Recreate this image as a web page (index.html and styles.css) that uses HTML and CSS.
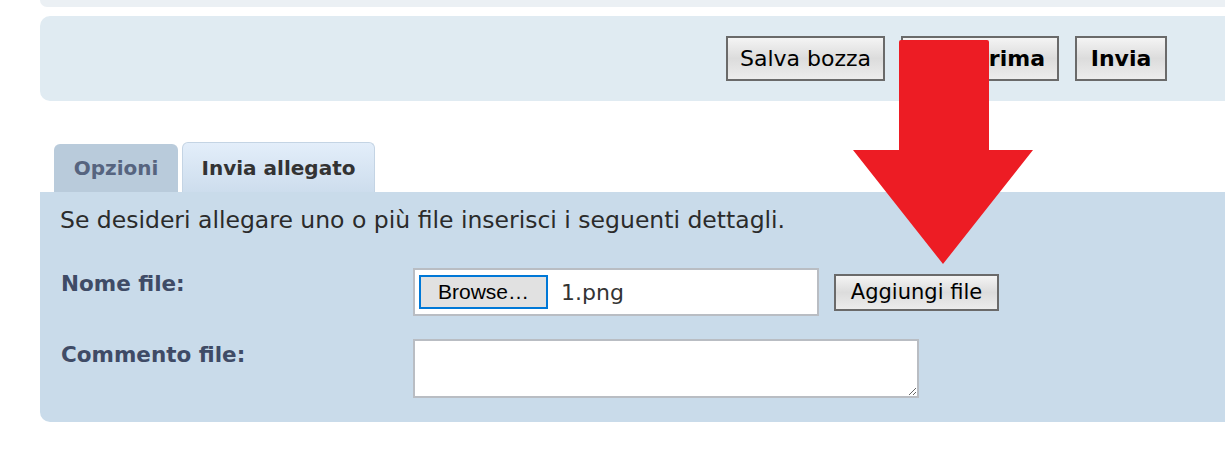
FILE: index.html
```html
<!DOCTYPE html>
<html lang="it">
<head>
    <meta charset="UTF-8">
    <meta name="viewport" content="width=device-width, initial-scale=1.0">
    <title>Invia allegato</title>
    <link rel="stylesheet" href="styles.css">
</head>
<body>
    <div class="page">
        <div class="top-panel"></div>

        <div class="actions-panel">
            <button class="btn">Salva bozza</button>
            <button class="btn btn-bold">Anteprima</button>
            <button class="btn btn-bold">Invia</button>
        </div>

        <div class="tabs">
            <div class="tab">Opzioni</div>
            <div class="tab tab-active">Invia allegato</div>
        </div>

        <div class="tab-content">
            <p class="intro">Se desideri allegare uno o più file inserisci i seguenti dettagli.</p>

            <div class="form-row">
                <label class="form-label" for="file">Nome file:</label>
                <div class="form-field">
                    <div class="file-input">
                        <span class="browse-btn">Browse…</span>
                        <span class="file-name">1.png</span>
                    </div>
                    <button class="btn btn-add">Aggiungi file</button>
                </div>
            </div>

            <div class="form-row">
                <label class="form-label" for="comment">Commento file:</label>
                <div class="form-field">
                    <textarea id="comment" class="comment"></textarea>
                </div>
            </div>
        </div>

        <!-- freccia rossa sopra il pulsante -->
        <svg class="arrow" width="182" height="226" viewBox="0 0 182 226">
            <path d="M46 2 Q46 0 48 0 L134 0 Q136 0 136 2 L136 110 L180 110 L90 224 L0 110 L46 110 Z" fill="#ed1c24"/>
        </svg>
    </div>
</body>
</html>
```

FILE: styles.css
```css
body {
    margin: 0;
    font-family: "DejaVu Sans", Verdana, sans-serif;
    background: #fff;
    overflow: hidden;
}
.page {
    position: relative;
    padding-left: 40px;
    margin-right: -20px;
}
.top-panel {
    height: 7px;
    background-color: #ebf0f4;
    border-radius: 0 0 0 10px;
}
.actions-panel {
    margin-top: 9px;
    height: 85px;
    background-color: #e0ebf2;
    border-radius: 10px 0 0 10px;
    display: flex;
    justify-content: flex-end;
    align-items: flex-start;
    gap: 16px;
    padding: 20px 78px 0 0;
    box-sizing: border-box;
}
.btn {
    font-family: "DejaVu Sans", Verdana, sans-serif;
    font-size: 22px;
    color: #000;
    height: 45px;
    padding: 0;
    border: 2px solid #6a6a6a;
    background: linear-gradient(#f4f4f4, #dcdcdc 50%, #ececec);
    border-radius: 0;
}
.btn-bold {
    font-weight: bold;
}
.actions-panel .btn:nth-child(1) { width: 159px; }
.actions-panel .btn:nth-child(2) { width: 158px; }
.actions-panel .btn:nth-child(3) { width: 92px; }

.tabs {
    display: flex;
    align-items: flex-end;
    gap: 4px;
    margin-top: 41px;
    padding-left: 14px;
    height: 50px;
}
.tab {
    height: 48px;
    line-height: 48px;
    width: 124px;
    box-sizing: border-box;
    text-align: center;
    font-size: 20px;
    font-weight: bold;
    color: #56647f;
    background-color: #b9cbdb;
    border-radius: 6px 6px 0 0;
}
.tab-active {
    height: 50px;
    line-height: 50px;
    width: 193px;
    color: #333;
    background: linear-gradient(#e3eefa, #cddded);
    border: 1px solid #c4d4e4;
    border-bottom: none;
}
.tab-content {
    background-color: #c9dbea;
    border-radius: 0 0 0 10px;
    height: 230px;
    padding: 12px 0 0 20px;
    box-sizing: border-box;
}
.intro {
    margin: 0 0 32px;
    font-size: 23.5px;
    color: #2b2b2b;
    line-height: 32px;
}
.form-row {
    display: flex;
    align-items: flex-start;
    margin-bottom: 23px;
}
.form-label {
    width: 352px;
    padding-left: 1px;
    font-size: 21.5px;
    font-weight: bold;
    color: #3f4b66;
    line-height: 32px;
}
.form-field {
    display: flex;
    align-items: center;
    gap: 15px;
}
.file-input {
    width: 406px;
    height: 48px;
    box-sizing: border-box;
    background: #fff;
    border: 2px solid #b9bdc3;
    display: flex;
    align-items: center;
    padding-left: 4px;
    gap: 13px;
}
.browse-btn {
    width: 129px;
    height: 34px;
    box-sizing: border-box;
    border: 2px solid #0078d7;
    background: #e1e1e1;
    text-align: center;
    line-height: 30px;
    font-family: "Liberation Sans", Arial, sans-serif;
    font-size: 21px;
    color: #000;
}
.file-name {
    font-size: 22px;
    color: #333;
}
.btn-add {
    width: 165px;
    height: 37px;
    font-size: 21px;
}
.comment {
    width: 506px;
    height: 59px;
    box-sizing: border-box;
    border: 2px solid #b9bdc3;
    background: #fff;
    margin: 0;
}
.arrow {
    position: absolute;
    left: 853px;
    top: 40px;
}
```
